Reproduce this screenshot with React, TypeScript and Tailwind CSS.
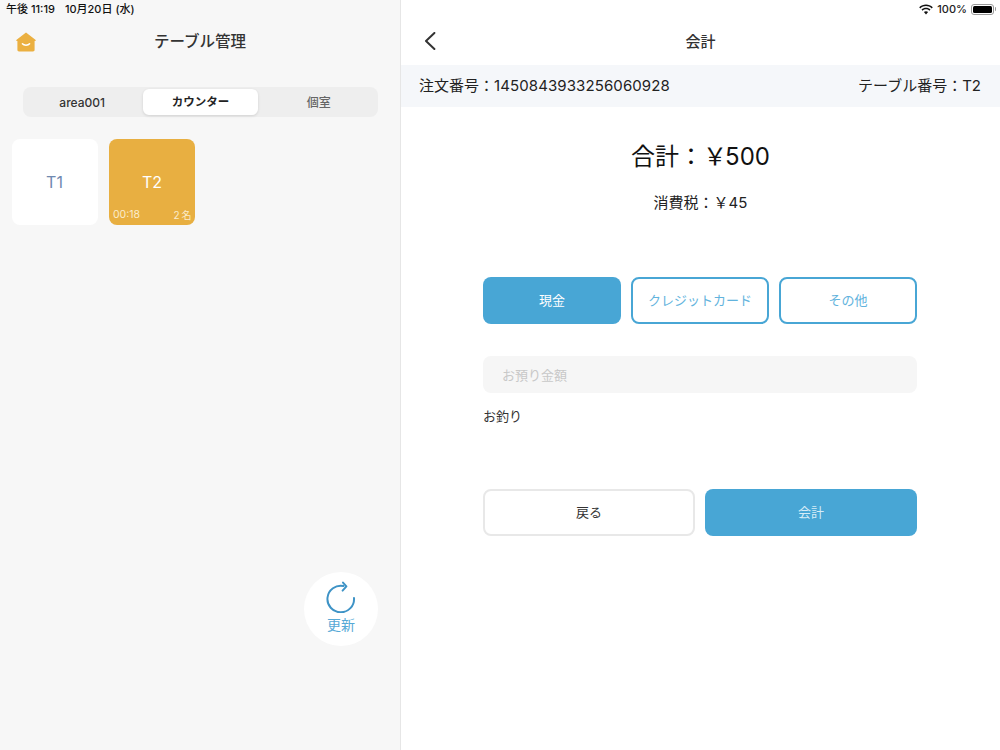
function HomeIcon() {
  return (
    <svg width="20" height="20" viewBox="0 0 20 20" className="block">
      <path
        d="M10 0.5 L19.4 7.7 C20 8.2 19.8 9 19 9 L18.6 9 L18.6 17.8 C18.6 18.8 18 19.4 17 19.4 L3 19.4 C2 19.4 1.4 18.8 1.4 17.8 L1.4 9 L1 9 C0.2 9 0 8.2 0.6 7.7 Z"
        fill="#EBB041"
      />
      <path d="M6.4 11.8 C8 13.6 12 13.6 13.6 11.8" fill="none" stroke="#fff" strokeWidth="1.5" strokeLinecap="round" />
    </svg>
  );
}

function RefreshIcon() {
  return (
    <svg width="30" height="32" viewBox="0 0 30 32" className="block">
      <path
        d="M17.5 5 A13.3 13.3 0 1 0 28 17"
        fill="none"
        stroke="#3E93C6"
        strokeWidth="2"
        strokeLinecap="round"
      />
      <path d="M17 1.6 L20.4 5.4 L16.6 9.6" fill="none" stroke="#3E93C6" strokeWidth="2" strokeLinecap="round" strokeLinejoin="round" />
    </svg>
  );
}

function BackIcon() {
  return (
    <svg width="12" height="18" viewBox="0 0 12 18" className="block">
      <path d="M10.4 1 L2 9 L10.4 17" fill="none" stroke="#333" strokeWidth="2" strokeLinecap="round" strokeLinejoin="round" />
    </svg>
  );
}

function WifiIcon() {
  return (
    <svg width="14" height="11" viewBox="0 0 14 11" className="block">
      <path d="M7 10.4 L4.9 8.1 C6.1 7 7.9 7 9.1 8.1 Z" fill="#111" />
      <path d="M3.6 6.7 L2.5 5.5 C5 3.2 9 3.2 11.5 5.5 L10.4 6.7 C8.5 4.9 5.5 4.9 3.6 6.7 Z" fill="#111" />
      <path d="M1.3 4.4 L0.2 3.2 C4 -0.4 10 -0.4 13.8 3.2 L12.7 4.4 C9.5 1.3 4.5 1.3 1.3 4.4 Z" fill="#111" />
    </svg>
  );
}

function Battery() {
  return (
    <div className="flex items-center gap-px">
      <div className="h-[11px] w-[23px] rounded-[3px] border border-[#999] p-px">
        <div className="h-full w-full rounded-[1.5px] bg-black" />
      </div>
      <div className="h-1 w-px rounded-r-full bg-[#999]" />
    </div>
  );
}

export default function App() {
  return (
    <div className="flex h-[750px] w-[1000px] overflow-hidden bg-white font-['Inter','Noto_Sans_CJK_JP',sans-serif] text-[#333]">
      {/* left: table list */}
      <section className="relative flex h-full w-[401px] shrink-0 flex-col border-r border-[#e6e6e6] bg-[#f7f7f7]">
        <div className="flex h-5 items-center gap-[10px] pb-[2px] pl-[6px] text-[11px] font-medium leading-none text-[#111]">
          <span>午後 11:19</span>
          <span>10月20日 (水)</span>
        </div>
        <div className="relative flex h-[44px] items-center justify-center">
          <div className="absolute left-[16px] top-[12px]">
            <HomeIcon />
          </div>
          <h1 className="text-[15.5px] font-medium text-[#333]">テーブル管理</h1>
        </div>
        <div className="ml-[23px] mr-[22px] mt-[23px] grid h-[30px] grid-cols-3 items-center rounded-lg bg-[#eeeeee]">
          <div className="pt-px text-center text-xs font-medium text-[#333]">area001</div>
          <div className="mx-[2px] flex h-[26px] items-center justify-center rounded-md bg-white pt-px text-[11.5px] font-bold text-[#222] shadow-[0_1px_3px_rgba(0,0,0,0.12)]">
            カウンター
          </div>
          <div className="pt-px text-center text-xs font-medium text-[#666]">個室</div>
        </div>
        <div className="mt-[22px] flex gap-[11px] pl-3">
          <div className="flex h-[86px] w-[86px] items-center justify-center rounded-lg bg-white pr-px text-base text-[#7089b0]">
            T1
          </div>
          <div className="relative flex h-[86px] w-[86px] items-center justify-center rounded-lg bg-[#e8af41] text-base text-white">
            T2
            <div className="absolute inset-x-1 bottom-[3px] flex items-center justify-between text-[10px] leading-[14px] text-[#fbeccb]">
              <span className="text-[10.5px]">00:18</span>
              <span className="tracking-[-0.5px]">2 名</span>
            </div>
          </div>
        </div>
        <button className="absolute left-[304px] top-[572px] flex h-[74px] w-[74px] flex-col items-center rounded-full bg-white pt-[9px]">
          <RefreshIcon />
          <span className="mt-1 text-sm leading-4 text-[#56a9d6]">更新</span>
        </button>
      </section>

      {/* right: checkout */}
      <section className="flex h-full min-w-0 flex-1 flex-col bg-white">
        <div className="flex h-5 items-center justify-end gap-1 pb-[2px] pr-1 text-[11px] font-medium leading-none text-[#222]">
          <WifiIcon />
          <span>100%</span>
          <Battery />
        </div>
        <div className="relative flex h-[45px] items-center justify-center">
          <div className="absolute left-[23px] top-[12px]">
            <BackIcon />
          </div>
          <h2 className="text-[15px] font-medium text-[#333]">会計</h2>
        </div>
        <div className="flex h-[42px] items-center justify-between bg-[#f5f7fa] pl-[18px] pr-[19px] text-[15px] text-[#222]">
          <span>
            注文番号：<span className="tracking-[0.1px]">1450843933256060928</span>
          </span>
          <span>テーブル番号：T2</span>
        </div>
        <p className="mt-8 text-center text-2xl leading-9 text-[#111]">
          合計：<span className="tracking-[-2px]">￥</span>500
        </p>
        <p className="mt-[18px] text-center text-[15px] leading-5 text-[#222]">消費税：￥45</p>
        <div className="ml-[82px] mr-[83px] mt-[64px] flex flex-col">
          <div className="grid grid-cols-3 gap-[10px]">
            <button className="h-[47px] rounded-lg bg-[#48a6d5] text-[13px] text-white">現金</button>
            <button className="h-[47px] rounded-lg border-2 border-[#48a6d5] text-[13px] text-[#62b3dd]">
              クレジットカード
            </button>
            <button className="h-[47px] rounded-lg border-2 border-[#48a6d5] text-[13px] text-[#62b3dd]">
              その他
            </button>
          </div>
          <input
            readOnly
            placeholder="お預り金額"
            className="mt-8 h-[37px] rounded-lg bg-[#f6f6f6] px-[19px] text-[13px] outline-none placeholder:text-[#c8c8c8]"
          />
          <p className="mt-[14px] text-[13px] leading-[18px] text-[#333]">お釣り</p>
          <div className="mt-[64px] grid grid-cols-2 gap-[10px]">
            <button className="h-[47px] rounded-lg border-2 border-[#e8e8e8] bg-white text-[13px] text-[#333]">
              戻る
            </button>
            <button className="h-[47px] rounded-lg bg-[#48a6d5] text-[13px] text-[#d6ecf7]">会計</button>
          </div>
        </div>
      </section>
    </div>
  );
}
